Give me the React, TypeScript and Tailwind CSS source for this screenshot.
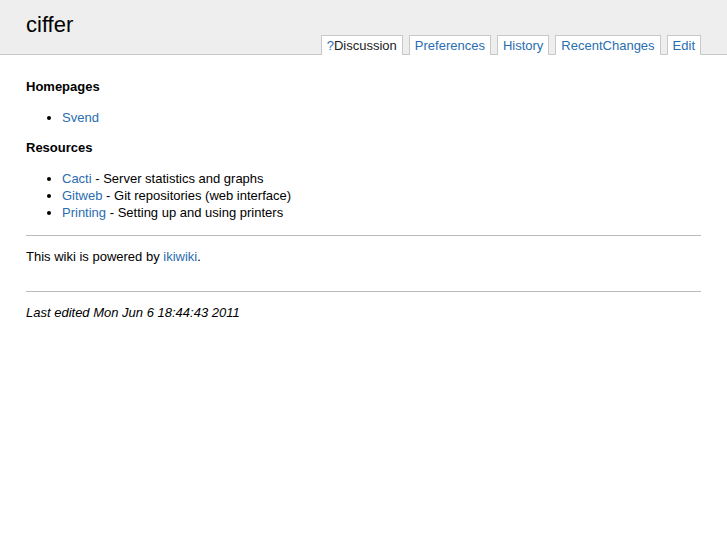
import React from "react";

const link = "text-[#2a6db0] no-underline";

export default function App() {
  return (
    <div className="min-h-[545px] bg-white text-[13px] text-black" style={{ fontFamily: '"Liberation Sans", Arial, sans-serif' }}>
      <div className="bg-[#eeeeee] border-b border-[#c8c8c8] px-[26px] flex items-end justify-between h-[55px]">
        <div className="self-start pt-[11px] text-[22px] leading-[28px]">ciffer</div>
        <div className="flex gap-[6px] mb-[-1px]">
          {[
            ["?", "Discussion", true],
            ["", "Preferences", false],
            ["", "History", false],
            ["", "RecentChanges", false],
            ["", "Edit", false],
          ].map(([q, label, dark]) => (
            <div key={label as string} className="bg-white border border-b-0 border-[#c8c8c8] px-[5px] h-[20px] leading-[19px]">
              {q ? <span className={link}>?</span> : null}
              <span className={dark ? "text-[#222]" : link}>{label as string}</span>
            </div>
          ))}
        </div>
      </div>
      <div className="px-[26px]">
        <h2 className="font-bold text-[13px] leading-[16px] mt-[24px]">Homepages</h2>
        <ul className="list-disc pl-[36px] mt-[14px] leading-[17px]">
          <li><a className={link}>Svend</a></li>
        </ul>
        <h2 className="font-bold text-[13px] leading-[16px] mt-[14px]">Resources</h2>
        <ul className="list-disc pl-[36px] mt-[14px] leading-[17px]">
          <li><a className={link}>Cacti</a> - Server statistics and graphs</li>
          <li><a className={link}>Gitweb</a> - Git repositories (web interface)</li>
          <li><a className={link}>Printing</a> - Setting up and using printers</li>
        </ul>
        <div className="border-t border-[#bbbbbb] mt-[14px] pt-[11px] pb-[24px]">
          This wiki is powered by <a className={link}>ikiwiki</a>.
        </div>
        <div className="border-t border-[#bbbbbb] pt-[11px] italic">
          Last edited Mon Jun 6 18:44:43 2011
        </div>
      </div>
    </div>
  );
}
